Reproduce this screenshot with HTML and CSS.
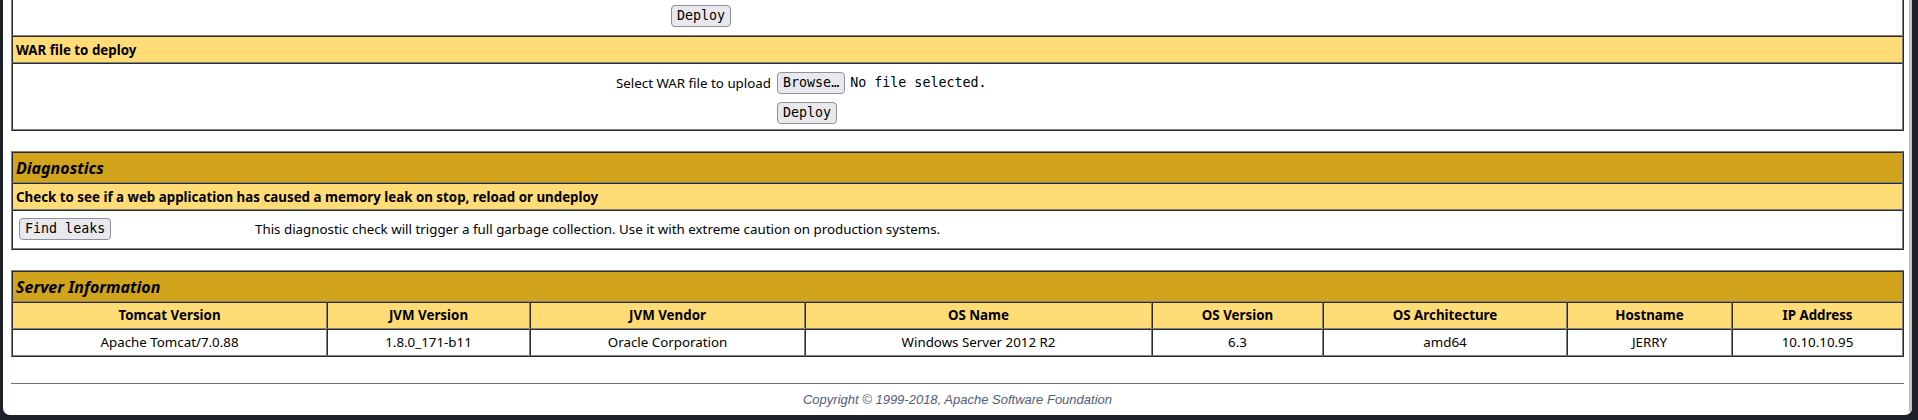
FILE: index.html
```html
<!DOCTYPE html>
<html>
<head>
<meta charset="utf-8">
<title>Tomcat Web Application Manager</title>
<link rel="stylesheet" href="styles.css">
</head>
<body>
<div class="window">
  <div class="page">
    <table class="tbl tbl-deploy">
      <tr>
        <td class="cell-plain">
          <div class="dir-spacer"></div>
          <div class="dir-btn"><button class="btn">Deploy</button></div>
        </td>
      </tr>
      <tr>
        <td class="header-left">WAR file to deploy</td>
      </tr>
      <tr>
        <td class="cell-plain">
          <div class="upload">
            <div class="ucell ulabel">Select WAR file to upload</div>
            <div class="ucell"><button class="btn">Browse…</button><span class="nofile">No file selected.</span></div>
            <div class="ucell"></div>
            <div class="ucell"><button class="btn">Deploy</button></div>
          </div>
        </td>
      </tr>
    </table>

    <table class="tbl tbl-diag">
      <tr><td class="title">Diagnostics</td></tr>
      <tr><td class="header-left">Check to see if a web application has caused a memory leak on stop, reload or undeploy</td></tr>
      <tr>
        <td class="cell-plain">
          <div class="diag">
            <div class="diag-btn"><button class="btn">Find leaks</button></div>
            <div class="diag-text">This diagnostic check will trigger a full garbage collection. Use it with extreme caution on production systems.</div>
          </div>
        </td>
      </tr>
    </table>

    <table class="tbl tbl-server">
      <colgroup>
        <col class="w1"><col class="w2"><col class="w3"><col class="w4"><col class="w5"><col class="w6"><col class="w7"><col class="w8">
      </colgroup>
      <tr><td class="title" colspan="8">Server Information</td></tr>
      <tr>
        <td class="header-center">Tomcat Version</td>
        <td class="header-center">JVM Version</td>
        <td class="header-center">JVM Vendor</td>
        <td class="header-center">OS Name</td>
        <td class="header-center">OS Version</td>
        <td class="header-center">OS Architecture</td>
        <td class="header-center">Hostname</td>
        <td class="header-center">IP Address</td>
      </tr>
      <tr>
        <td class="row-center">Apache Tomcat/7.0.88</td>
        <td class="row-center">1.8.0_171-b11</td>
        <td class="row-center">Oracle Corporation</td>
        <td class="row-center">Windows Server 2012 R2</td>
        <td class="row-center">6.3</td>
        <td class="row-center">amd64</td>
        <td class="row-center">JERRY</td>
        <td class="row-center">10.10.10.95</td>
      </tr>
    </table>

    <hr class="rule">
    <div class="copyright">Copyright © 1999-2018, Apache Software Foundation</div>
  </div>
  <div class="scrollbar"></div>
</div>
</body>
</html>
```

FILE: styles.css
```css
html, body {
  margin: 0;
  padding: 0;
  height: 420px;
  overflow: hidden;
  background: #1f2128;
}

.window {
  position: relative;
  margin-left: 3px;
  width: 1909px;
  height: 415px;
  background: #ffffff;
  border-radius: 0 0 7px 7px;
  overflow: hidden;
}

.scrollbar {
  position: absolute;
  top: 0;
  right: 0;
  width: 3px;
  height: 412px;
  background: #c2c2c2;
  border-radius: 0 0 2px 2px;
}

.page {
  padding: 0 8px;
  font-family: "Noto Sans", "Open Sans", sans-serif;
  color: #000;
}

.tbl {
  width: 100%;
  border: 1px outset #808080;
  border-spacing: 0;
  border-collapse: separate;
  margin: 20px 0 0 0;
}

.tbl td {
  border: 1px inset #808080;
  padding: 3px;
}

.tbl-deploy {
  margin-top: -43px;
}

.tbl td.title {
  background: #D2A41C;
  font-weight: bold;
  font-style: italic;
  font-size: 16px;
  line-height: 23px;
  text-align: left;
  padding: 4px 3px 2px;
}

.tbl td.header-left {
  background: #FFDC75;
  font-weight: bold;
  font-size: 13.33px;
  line-height: 19px;
  text-align: left;
  padding: 4px 3px 2px;
}

.header-center {
  background: #FFDC75;
  font-weight: bold;
  font-size: 13.33px;
  line-height: 19px;
  text-align: center;
}

.row-center {
  font-size: 13.33px;
  line-height: 19px;
  text-align: center;
}

.cell-plain {
  font-size: 13.33px;
}

.dir-spacer {
  height: 40px;
}

.dir-btn {
  padding: 3px 3px 5px 655px;
}

.btn {
  font-family: "DejaVu Sans Mono", monospace;
  font-size: 13.33px;
  line-height: 16px;
  color: #000;
  background: #e9e9ed;
  border: 1px solid #8f8f9d;
  border-radius: 4px;
  padding: 2px 5px;
  margin: 0;
  vertical-align: middle;
}

.upload {
  display: grid;
  grid-template-columns: auto 528px;
  justify-content: center;
  align-items: center;
}

.ucell {
  padding: 4px 3px 2px;
  line-height: 22px;
}

.ulabel {
  text-align: right;
}

.nofile {
  font-family: "DejaVu Sans Mono", monospace;
  font-size: 13.33px;
  margin-left: 5px;
  vertical-align: middle;
}

.diag {
  display: flex;
  align-items: center;
  min-height: 31px;
}

.diag-btn {
  width: 236px;
  padding: 3px;
  box-sizing: border-box;
}

.diag-text {
  padding: 3px;
}

.tbl-server {
  table-layout: fixed;
}

.w1 { width: 315px; }
.w2 { width: 203px; }
.w3 { width: 275px; }
.w4 { width: 347px; }
.w5 { width: 171px; }
.w6 { width: 244px; }
.w7 { width: 165px; }
.w8 { width: 171px; }

.rule {
  margin: 26px 0 0 0;
  border: 0;
  border-top: 1px solid #6b6f7a;
  height: 0;
}

.copyright {
  margin-top: 8px;
  text-align: center;
  font-family: "Liberation Sans", Arial, sans-serif;
  font-style: italic;
  font-size: 13px;
  color: #525D76;
}
```
